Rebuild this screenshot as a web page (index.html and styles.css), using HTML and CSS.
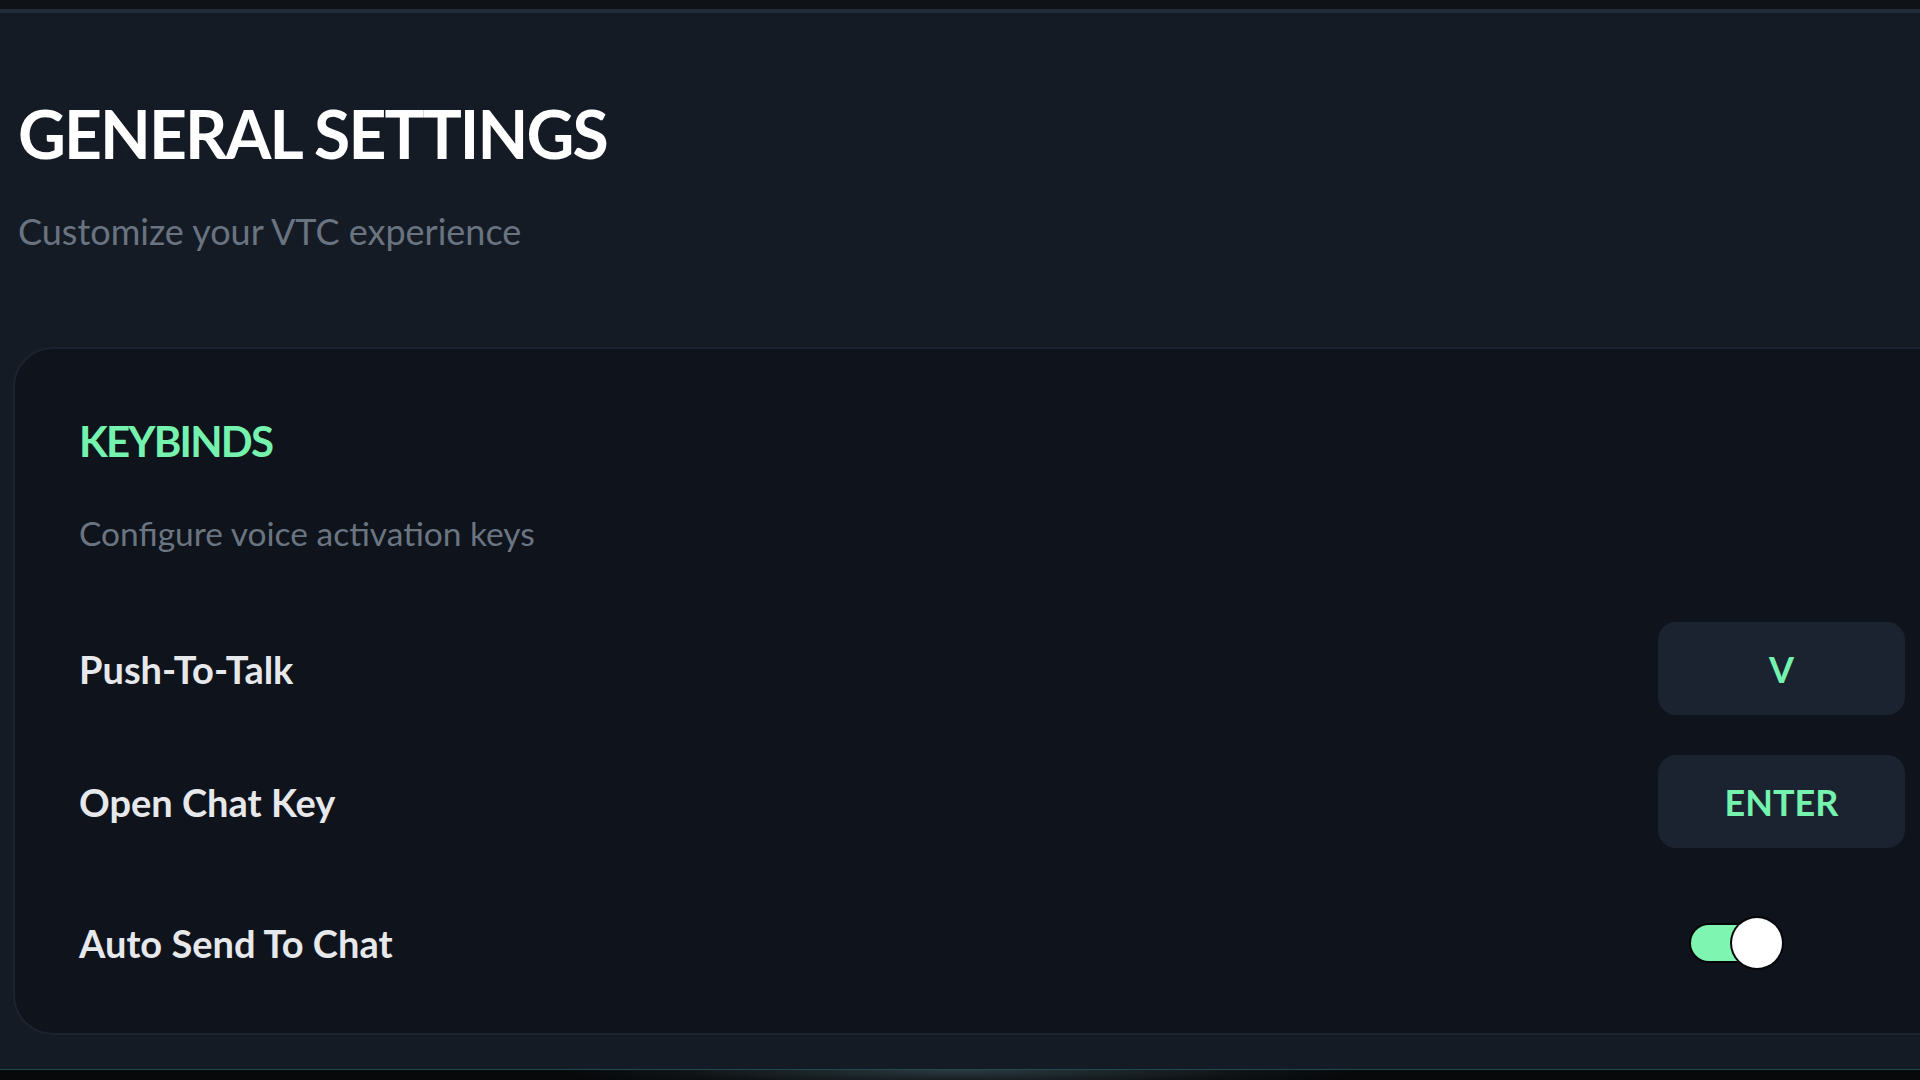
FILE: index.html
```html
<!DOCTYPE html>
<html lang="en">
<head>
<meta charset="utf-8">
<title>General Settings</title>
<link rel="stylesheet" href="styles.css">
</head>
<body>
<div class="topbar"></div>
<main class="main">
  <header class="page-head">
    <h1 class="page-title">GENERAL SETTINGS</h1>
    <p class="page-sub">Customize your VTC experience</p>
  </header>
  <section class="card">
    <h2 class="card-title">KEYBINDS</h2>
    <p class="card-desc">Configure voice activation keys</p>
    <div class="rows">
      <div class="row">
        <span class="row-label">Push-To-Talk</span>
        <button class="key-btn">V</button>
      </div>
      <div class="row">
        <span class="row-label">Open Chat Key</span>
        <button class="key-btn">ENTER</button>
      </div>
      <div class="row row-toggle">
        <span class="row-label">Auto Send To Chat</span>
        <div class="toggle-cell">
          <div class="toggle on"><span class="knob"></span></div>
        </div>
      </div>
    </div>
  </section>
</main>
<footer class="footer"></footer>
</body>
</html>
```
FILE: styles.css
```css
* { box-sizing: border-box; }
html, body { margin: 0; padding: 0; }
body {
  width: 1920px;
  height: 1080px;
  overflow: hidden;
  background: #151b25;
  font-family: Lato, "Open Sans", sans-serif;
  display: flex;
  flex-direction: column;
}
.topbar {
  height: 13px;
  flex: none;
  background: #0f1217;
  border-bottom: 4px solid #232c3a;
}
.main {
  flex: 1;
  padding: 0 0 0 13px;
  display: flex;
  flex-direction: column;
}
.page-head { padding-left: 5px; }
.page-title {
  margin: 87px 0 0;
  font-size: 66px;
  line-height: 68px;
  font-weight: 700;
  color: #ffffff;
  letter-spacing: -1.9px;
}
.page-sub {
  margin: 45px 0 0;
  font-size: 36px;
  line-height: 36px;
  color: #6a7380;
}
.card {
  margin-top: 98px;
  width: 1959px;
  flex: none;
  background: #0f131b;
  border: 2px solid #1c2330;
  border-radius: 40px;
  padding: 71px 65px 44px 64px;
}
.card-title {
  margin: 0;
  font-size: 42px;
  line-height: 42px;
  font-weight: 700;
  color: #74f2ae;
  letter-spacing: -1.8px;
}
.card-desc {
  margin: 54px 0 0;
  font-size: 33.5px;
  line-height: 34px;
  color: #6b7582;
}
.rows {
  margin-top: 72px;
  display: flex;
  flex-direction: column;
  gap: 40px;
}
.row {
  height: 93px;
  display: flex;
  align-items: center;
  justify-content: space-between;
}
.row-toggle { margin-top: 8px; }
.row-label {
  font-size: 38px;
  font-weight: 700;
  color: #e6e8eb;
}
.key-btn {
  width: 247px;
  height: 93px;
  border: none;
  border-radius: 18px;
  background: #1b2330;
  color: #74f2ae;
  font-family: Lato, "Open Sans", sans-serif;
  font-size: 36px;
  font-weight: 700;
  padding: 0;
}
.toggle-cell {
  width: 247px;
  display: flex;
  align-items: center;
}
.toggle {
  position: relative;
  margin-left: 33px;
  width: 82px;
  height: 36px;
  border-radius: 18px;
  background: #7ef5b0;
  box-shadow: 0 0 0 2px #05070a;
}
.knob {
  position: absolute;
  right: -9px;
  top: -7px;
  width: 50px;
  height: 50px;
  border-radius: 50%;
  background: #ffffff;
  box-shadow: 0 0 0 2px #05070a;
}
.footer {
  height: 11px;
  flex: none;
  background: radial-gradient(ellipse 400px 20px at 50% 0%, #2b3a40 0%, #101417 70%, #07090b 100%);
  border-top: 1px solid #1d4a50;
}
```
